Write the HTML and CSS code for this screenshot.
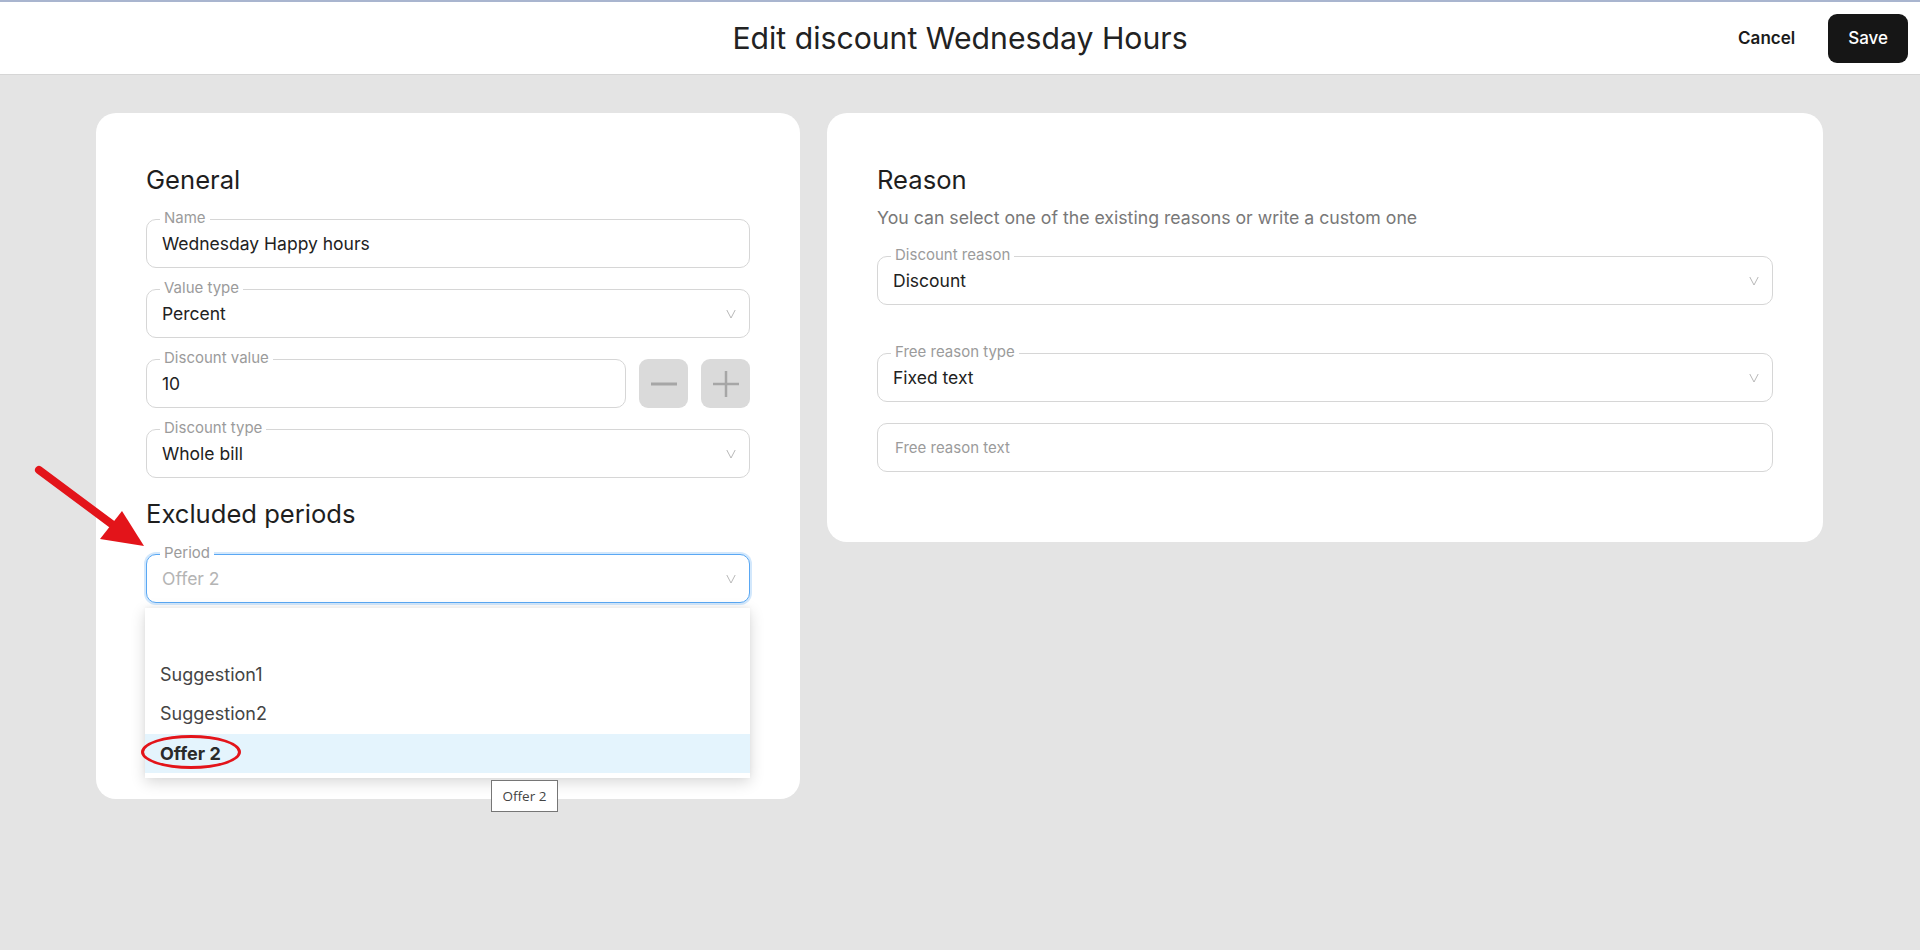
FILE: index.html
```html
<!DOCTYPE html>
<html lang="en">
<head>
<meta charset="utf-8">
<title>Edit discount Wednesday Hours</title>
<link rel="stylesheet" href="styles.css">
</head>
<body>
<header class="topbar">
  <div class="topbar-side"></div>
  <h1 class="title">Edit discount Wednesday Hours</h1>
  <div class="actions">
    <button class="btn btn-cancel">Cancel</button>
    <button class="btn btn-save">Save</button>
  </div>
</header>

<main class="content">
  <section class="card card-general">
    <h2 class="card-title">General</h2>

    <div class="field">
      <span class="field-label">Name</span>
      <span class="field-value">Wednesday Happy hours</span>
    </div>

    <div class="field select">
      <span class="field-label">Value type</span>
      <span class="field-value">Percent</span>
      <svg class="chev" viewBox="0 0 10 10" width="10" height="10"><path d="M0.8 1 L5 9 L9.2 1" fill="none" stroke="#b8b8b8" stroke-width="1"/></svg>
    </div>

    <div class="stepper-row">
      <div class="field grow">
        <span class="field-label">Discount value</span>
        <span class="field-value">10</span>
      </div>
      <button class="step-btn" aria-label="decrease">
        <svg viewBox="0 0 28 28" width="28" height="28"><path d="M1 14 H27" stroke="#a6a6a6" stroke-width="3"/></svg>
      </button>
      <button class="step-btn" aria-label="increase">
        <svg viewBox="0 0 28 28" width="28" height="28"><path d="M1 14 H27 M14 1 V27" stroke="#a6a6a6" stroke-width="2.5"/></svg>
      </button>
    </div>

    <div class="field select">
      <span class="field-label">Discount type</span>
      <span class="field-value">Whole bill</span>
      <svg class="chev" viewBox="0 0 10 10" width="10" height="10"><path d="M0.8 1 L5 9 L9.2 1" fill="none" stroke="#b8b8b8" stroke-width="1"/></svg>
    </div>

    <h2 class="card-title section-title">Excluded periods</h2>

    <div class="period-wrap">
      <div class="field select focused">
        <span class="field-label">Period</span>
        <span class="field-placeholder-value">Offer 2</span>
        <svg class="chev" viewBox="0 0 10 10" width="10" height="10"><path d="M0.8 1 L5 9 L9.2 1" fill="none" stroke="#b8b8b8" stroke-width="1"/></svg>
      </div>
      <ul class="dropdown">
        <li class="option empty"></li>
        <li class="option">Suggestion1</li>
        <li class="option">Suggestion2</li>
        <li class="option active"><span class="opt-text">Offer 2<span class="mark"></span></span></li>
      </ul>
    </div>

    <div class="period-list">
      <div class="period-add"></div>
    </div>

    <div class="tooltip">Offer 2</div>
  </section>

  <section class="card card-reason">
    <h2 class="card-title">Reason</h2>
    <p class="subtitle">You can select one of the existing reasons or write a custom one</p>

    <div class="field select first">
      <span class="field-label">Discount reason</span>
      <span class="field-value">Discount</span>
      <svg class="chev" viewBox="0 0 10 10" width="10" height="10"><path d="M0.8 1 L5 9 L9.2 1" fill="none" stroke="#b8b8b8" stroke-width="1"/></svg>
    </div>

    <div class="field select spaced">
      <span class="field-label">Free reason type</span>
      <span class="field-value">Fixed text</span>
      <svg class="chev" viewBox="0 0 10 10" width="10" height="10"><path d="M0.8 1 L5 9 L9.2 1" fill="none" stroke="#b8b8b8" stroke-width="1"/></svg>
    </div>

    <div class="field">
      <span class="field-placeholder">Free reason text</span>
    </div>
  </section>
</main>

<svg class="annot-arrow" viewBox="0 0 130 100" width="130" height="100">
  <line x1="14" y1="16" x2="92" y2="74" stroke="#e3141a" stroke-width="8" stroke-linecap="round"/>
  <polygon points="119,92 75,85 97,57" fill="#e3141a"/>
</svg>
</body>
</html>
```

FILE: styles.css
```css
* { box-sizing: border-box; }

body {
  margin: 0;
  min-height: 950px;
  background: #e4e4e4;
  font-family: Inter, "Liberation Sans", sans-serif;
  color: #222;
  position: relative;
}

/* Header */
.topbar {
  height: 75px;
  background: #fff;
  border-top: 2px solid #a9b5cf;
  border-bottom: 1px solid #d6d6d6;
  display: grid;
  grid-template-columns: 1fr auto 1fr;
  align-items: center;
}

.title {
  margin: 0;
  font-size: 30.2px;
  font-weight: 400;
  color: #222;
}

.actions {
  justify-self: end;
  display: flex;
  align-items: center;
  gap: 12px;
  padding-right: 12px;
}

.btn {
  height: 49px;
  border: none;
  font-family: inherit;
  font-size: 17px;
  cursor: pointer;
}

.btn-cancel {
  background: transparent;
  padding: 0 21px;
  font-weight: 600;
  color: #1b1b1b;
}

.btn-save {
  background: #161616;
  color: #fff;
  border-radius: 9px;
  padding: 0 20px;
  font-weight: 500;
}

/* Content */
.content {
  display: grid;
  grid-template-columns: 704px 996px;
  gap: 27px;
  padding: 38px 96px 0;
  align-items: start;
}

.card {
  position: relative;
  background: #fff;
  border-radius: 20px;
  padding: 51px 50px 50px;
}

.card-reason {
  padding-bottom: 70px;
}

.card-title {
  margin: 0;
  font-size: 25.6px;
  line-height: 31px;
  font-weight: 400;
  color: #1e1e1e;
}

.section-title {
  margin-top: 20px;
}

.subtitle {
  margin: 12px 0 0;
  font-size: 17.7px;
  line-height: 21px;
  color: #787878;
}

/* Fields */
.field {
  position: relative;
  height: 49px;
  border: 1px solid #d6d6d6;
  border-radius: 10px;
  display: flex;
  align-items: center;
  padding: 0 15px;
  margin-top: 21px;
  background: #fff;
}

.card-title + .field {
  margin-top: 24px;
}

.card-title + .period-wrap .field {
  margin-top: 25px;
}

.field.first { margin-top: 28px; }
.field.spaced { margin-top: 48px; }

.select { padding-right: 13px; }

.field-label {
  position: absolute;
  left: 13px;
  top: -11px;
  padding: 0 4px;
  background: #fff;
  font-size: 15px;
  line-height: 17px;
  color: #9b9b9b;
}

.field-value {
  font-size: 17.5px;
  color: #222;
}

.field-placeholder-value {
  font-size: 17.5px;
  color: #b4b4b4;
}

.field-placeholder {
  margin-left: 2px;
  font-size: 15px;
  color: #9b9b9b;
}

.chev {
  margin-left: auto;
  display: block;
}

.focused {
  border-color: #5aa8f4;
  box-shadow: 0 0 0 2px #d3e8fc;
}

/* Stepper */
.stepper-row {
  display: flex;
  gap: 13px;
  margin-top: 21px;
}

.stepper-row .field {
  margin-top: 0;
  flex: 1;
}

.step-btn {
  width: 49px;
  height: 49px;
  border: none;
  border-radius: 9px;
  background: #dadada;
  display: flex;
  align-items: center;
  justify-content: center;
  padding: 0;
}

/* Period + dropdown */
.period-wrap {
  position: relative;
}

.dropdown {
  position: absolute;
  z-index: 5;
  top: 54px;
  left: -1px;
  width: 605px;
  margin: 0;
  padding: 7px 0 5px;
  list-style: none;
  background: #fff;
  box-shadow: 0 4px 14px rgba(0, 0, 0, 0.16), 0 -1px 4px rgba(0, 0, 0, 0.04);
}

.option {
  height: 39.5px;
  display: flex;
  align-items: center;
  padding-left: 15px;
  font-size: 18px;
  color: #444;
}

.option.active {
  background: #e4f4fd;
  font-weight: 700;
  color: #2a2a2a;
}

.opt-text {
  position: relative;
}

.mark {
  position: absolute;
  left: -19px;
  top: -8px;
  width: 100px;
  height: 34px;
  border: 3px solid #e3141a;
  border-radius: 50%;
}

.period-list {
  height: 146px;
  padding-top: 80px;
}

.period-add {
  margin-left: auto;
  width: 40px;
  height: 40px;
  border-right: 2px solid #c2c2c2;
}

.tooltip {
  position: absolute;
  z-index: 6;
  left: 395px;
  top: 667px;
  width: 67px;
  height: 32px;
  border: 1px solid #767676;
  background: #fff;
  display: flex;
  align-items: center;
  justify-content: center;
  font-family: "Open Sans", "Noto Sans", sans-serif;
  font-size: 13.5px;
  color: #444;
}

/* Annotation arrow */
.annot-arrow {
  position: absolute;
  left: 25px;
  top: 454px;
  z-index: 10;
}
```
